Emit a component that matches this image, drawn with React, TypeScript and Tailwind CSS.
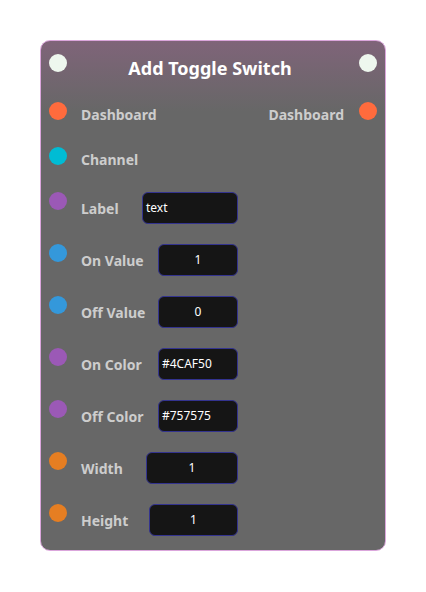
const font = { fontFamily: '"Noto Sans", "DejaVu Sans", sans-serif' };

type Field = {
  label: string;
  dot: string;
  value?: string;
  width?: string;
  align?: 'left' | 'center';
};

const fields: Field[] = [
  { label: 'Channel', dot: 'bg-[#00bcd4]' },
  { label: 'Label', dot: 'bg-[#9b59b6]', value: 'text', width: 'w-[96px]', align: 'left' },
  { label: 'On Value', dot: 'bg-[#3498db]', value: '1', width: 'w-[80px]', align: 'center' },
  { label: 'Off Value', dot: 'bg-[#3498db]', value: '0', width: 'w-[80px]', align: 'center' },
  { label: 'On Color', dot: 'bg-[#9b59b6]', value: '#4CAF50', width: 'w-[80px]', align: 'left' },
  { label: 'Off Color', dot: 'bg-[#9b59b6]', value: '#757575', width: 'w-[80px]', align: 'left' },
  { label: 'Width', dot: 'bg-[#e67e22]', value: '1', width: 'w-[92px]', align: 'center' },
  { label: 'Height', dot: 'bg-[#e67e22]', value: '1', width: 'w-[89px]', align: 'center' },
];

const Dot = ({ color }: { color: string }) => (
  <div className={`w-[18px] h-[18px] rounded-full shrink-0 ${color}`} />
);

export default function App() {
  return (
    <div className="min-h-screen bg-white pt-[40px] pl-[40px]" style={font}>
      <div className="w-[346px] h-[511px] rounded-[10px] border border-[#dba6dc] bg-[linear-gradient(to_bottom,#7f6479_0px,#676767_70px)] px-[8px] pt-[13px] pb-[14px]">
        {/* Header */}
        <div className="flex items-start justify-between h-[18px]">
          <Dot color="bg-[#eef7ee]" />
          <div className="text-[18px] font-bold text-white leading-none mt-[5px] mr-[6px]">
            Add Toggle Switch
          </div>
          <Dot color="bg-[#eef7ee]" />
        </div>

        <div className="flex flex-col gap-[20px] mt-[30px]">
          {/* Dashboard row */}
          <div className="flex items-start justify-between">
            <div className="flex items-start gap-[14px]">
              <Dot color="bg-[#ff6b3d]" />
              <div className="h-[25px] flex items-center text-[14px] font-bold text-[#cdcdcd]">
                Dashboard
              </div>
            </div>
            <div className="flex items-start gap-[15px]">
              <div className="h-[25px] flex items-center text-[14px] font-bold text-[#cdcdcd]">
                Dashboard
              </div>
              <Dot color="bg-[#ff6b3d]" />
            </div>
          </div>

          {fields.map((f) => (
            <div key={f.label} className="flex items-start gap-[14px]">
              <Dot color={f.dot} />
              <div className="w-[157px] flex items-center justify-between">
                <div
                  className={`${f.value ? 'h-[32px]' : 'h-[25px]'} flex items-center text-[14px] font-bold text-[#cdcdcd]`}
                >
                  {f.label}
                </div>
                {f.value && (
                  <div
                    className={`${f.width} h-[32px] rounded-[6px] border border-[#33338f] bg-[#151515] flex items-center text-[12px] text-white ${
                      f.align === 'center' ? 'justify-center' : 'justify-start pl-[3px]'
                    }`}
                  >
                    {f.value}
                  </div>
                )}
              </div>
            </div>
          ))}
        </div>
      </div>
    </div>
  );
}
